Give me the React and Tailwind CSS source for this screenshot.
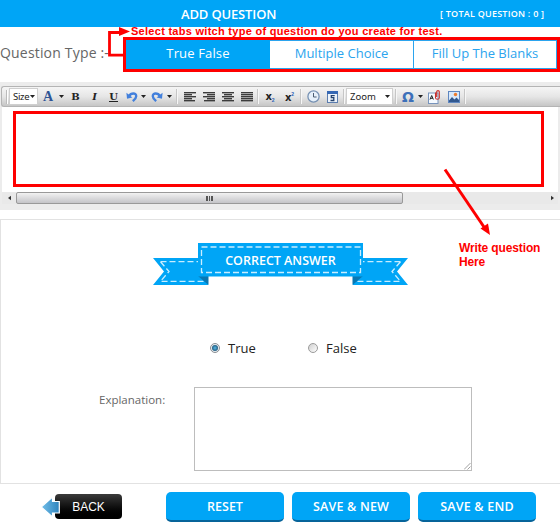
import React from "react";

const sans = "font-['Open_Sans','Noto_Sans',sans-serif]";

const Caret = () => (
  <svg width="5" height="3" viewBox="0 0 5 3" className="shrink-0">
    <path d="M0 0h5L2.5 3z" fill="#222" />
  </svg>
);

const Cell = ({ w, children }) => (
  <div className={`flex h-full shrink-0 items-center justify-center ${w}`}>{children}</div>
);

const Sep = ({ w }) => (
  <Cell w={w}>
    <span className="h-[15px] w-px bg-[#c6c6c6]" />
    <span className="h-[15px] w-px bg-[#f7f7f7]" />
  </Cell>
);

const Lines = ({ rows }) => (
  <svg width="12" height="10" viewBox="0 0 12 10">
    {rows.map(([x, w], i) => (
      <rect key={i} x={x} y={i * 2} width={w} height="1.4" fill="#3c3c3c" />
    ))}
  </svg>
);

const Undo = ({ flip }) => (
  <svg width="12" height="12" viewBox="0 0 12 12" className={flip ? "-scale-x-100" : ""}>
    <path d="M3 5C5 1.8 10.3 1.4 10.2 5.2 10.1 7.6 8.600 8.700 6.800 10.200" fill="none" stroke="#4380dc" strokeWidth="2.400" />
    <path d="M.4 1.800 1 7.800 6.400 6.600z" fill="#4380dc" />
  </svg>
);

function Toolbar() {
  return (
    <div className="ml-px mt-[4px] flex h-[21px] shrink-0 items-center overflow-hidden rounded-l-[3px] border border-r-0 border-[#b4b4b4] bg-linear-to-b from-[#f5f5f5] via-[#e6e6e6] to-[#c6c6c6] text-[#222]">
      <Cell w="w-[7px]">
        <span className="ml-[2px] h-[14px] w-[2px] border-x border-l-[#bbb] border-r-white" />
      </Cell>
      <div className="flex h-[17px] w-[29px] shrink-0 items-center justify-between border border-[#cfcfcf] bg-white pl-[3px] pr-[2px]">
        <span className="font-['Noto_Sans',sans-serif] text-[9.5px] leading-none tracking-[-0.3px]">Size</span>
        <Caret />
      </div>
      <Cell w="w-[20px]">
        <span className="font-['Liberation_Serif',serif] text-[14px] font-bold leading-none text-[#2d5394]">A</span>
      </Cell>
      <Cell w="w-[6px]"><Caret /></Cell>
      <Cell w="w-[23px]"><span className="font-['DejaVu_Serif',serif] text-[10px] font-bold leading-none">B</span></Cell>
      <Cell w="w-[15px]"><span className="font-['DejaVu_Serif',serif] text-[10px] font-bold italic leading-none">I</span></Cell>
      <Cell w="w-[23px]"><span className="border-b border-[#222] font-['DejaVu_Serif',serif] text-[10px] font-bold leading-[9px]">U</span></Cell>
      <Cell w="w-[13px]"><Undo /></Cell>
      <Cell w="w-[11px]"><Caret /></Cell>
      <Cell w="w-[15px]"><Undo flip /></Cell>
      <Cell w="w-[10px]"><Caret /></Cell>
      <Sep w="w-[6px]" />
      <Cell w="w-[19px]"><Lines rows={[[0, 12], [0, 8], [0, 12], [0, 8], [0, 11]]} /></Cell>
      <Cell w="w-[19px]"><Lines rows={[[0, 12], [4, 8], [0, 12], [4, 8], [1, 11]]} /></Cell>
      <Cell w="w-[19px]"><Lines rows={[[0, 12], [2, 8], [0, 12], [2, 8], [0, 12]]} /></Cell>
      <Cell w="w-[19px]"><Lines rows={[[0, 12], [0, 12], [0, 12], [0, 12], [0, 12]]} /></Cell>
      <Sep w="w-[4px]" />
      <Cell w="w-[20px]">
        <span className="font-['DejaVu_Sans',sans-serif] text-[10px] font-bold leading-none">x</span>
        <span className="mt-[7px] font-['Liberation_Sans',sans-serif] text-[5px] font-bold leading-none text-[#2b5fb8]">2</span>
      </Cell>
      <Cell w="w-[19px]">
        <span className="mt-[2px] font-['DejaVu_Sans',sans-serif] text-[10px] font-bold leading-none">x</span>
        <span className="mb-[5px] font-['Liberation_Sans',sans-serif] text-[5px] font-bold leading-none text-[#2b5fb8]">2</span>
      </Cell>
      <Sep w="w-[4px]" />
      <Cell w="w-[20px]">
        <svg width="13" height="13" viewBox="0 0 13 13">
          <circle cx="6.5" cy="6.5" r="5.6" fill="#e6f0fa" stroke="#7691b3" strokeWidth="1.3" />
          <path d="M6.5 3v4H9.6" fill="none" stroke="#4b5c72" />
        </svg>
      </Cell>
      <Cell w="w-[19px]">
        <svg width="11" height="12" viewBox="0 0 11 12">
          <rect x=".5" y=".5" width="10" height="11" fill="#eef4fb" stroke="#5a7cae" />
          <rect width="11" height="3" fill="#3668b4" />
          <path d="M7.7 4.7H4.3v2h2.5v2.8H3.5" fill="none" stroke="#26436f" strokeWidth="1.3" />
        </svg>
      </Cell>
      <Sep w="w-[4px]" />
      <div className="flex h-[17px] w-[47px] shrink-0 items-center justify-between border border-[#cfcfcf] bg-white pl-[3px] pr-[2px]">
        <span className="font-['Noto_Sans',sans-serif] text-[9.5px] leading-none">Zoom</span>
        <Caret />
      </div>
      <Sep w="w-[6px]" />
      <Cell w="w-[18px]"><span className="font-['DejaVu_Sans',sans-serif] text-[14px] font-bold leading-none text-[#3d70b9]">Ω</span></Cell>
      <Cell w="w-[6px]"><Caret /></Cell>
      <Cell w="w-[23px]">
        <svg width="13" height="14" viewBox="0 0 13 14">
          <rect x=".5" y="3" width="9.5" height="10.5" fill="#f5faff" stroke="#7894bc" />
          <path d="m2 9.5 1.7-4 1.7 4M2.7 8.3h2" fill="none" stroke="#222" />
          <path d="M7.5 2.5v5.2c0 2 3.8 2 3.8 0V2c0-1.8-2.6-1.8-2.6 0v5" fill="none" stroke="#c9302c" strokeWidth="1.1" />
        </svg>
      </Cell>
      <Cell w="w-[16px]">
        <svg width="12" height="12" viewBox="0 0 12 12">
          <rect x=".5" y=".5" width="11" height="11" fill="#d9e9fb" stroke="#5e86c0" />
          <circle cx="7.5" cy="3.5" r="1.7" fill="#ef7b2c" />
          <path d="M1 9.5 4 6l2.5 2.5L8.5 6.5 11 9v2H1z" fill="#31588f" />
        </svg>
      </Cell>
      <Sep w="w-[6px]" />
    </div>
  );
}

function Ribbon() {
  return (
    <div className="relative h-[42px] w-[255px]">
      <svg width="255" height="42" viewBox="0 0 255 42" className="block">
        <path d="M0 15h55v27H0l11-13.5zM255 15h-55v27h55l-11-13.5z" fill="#00a5f6" />
        <path d="M7.5 18.7H45M7.5 18.7l8.5 9.8-8.5 9.8H55M247.5 18.7H210M247.5 18.7l-8.5 9.8 8.5 9.8H200" fill="none" stroke="#c8edff" strokeWidth="1.3" strokeDasharray="6 3" />
        <path d="M45 33h10.500v9zM210 33h-10.500v9z" fill="#0877b3" />
        <rect x="45" width="165" height="33.500" fill="#00a5f6" />
        <rect x="48.500" y="4" width="159" height="25.500" fill="none" stroke="#c8edff" strokeWidth="1.300" strokeDasharray="6 3" />
      </svg>
      <span className="absolute inset-0 h-[35px] text-center text-[12.5px] font-semibold leading-[35px] text-white">CORRECT ANSWER</span>
    </div>
  );
}

const ActionButton = ({ children, className = "" }) => (
  <button className={`h-[30px] w-[118px] shrink-0 rounded-[5px] border-b-2 border-[#07649a] bg-[#00a5f6] pt-px text-[12.5px] font-semibold leading-[28px] text-white ${className}`}>
    {children}
  </button>
);

export default function App() {
  return (
    <div className={`relative flex h-[528px] w-[560px] flex-col overflow-hidden bg-white ${sans}`}>
      <header className="flex h-[27px] shrink-0 items-center whitespace-nowrap bg-[#00a5f6] font-semibold text-white">
        <h1 className="ml-[181px] w-[259px] pt-px text-[13px] leading-none tracking-[-0.15px]">ADD QUESTION</h1>
        <span className="text-[9px] leading-none tracking-[0.24px]">[ TOTAL QUESTION : 0 ]</span>
      </header>

      <div className="flex h-[55px] shrink-0 items-start whitespace-nowrap">
        <span className="w-[123px] shrink-0 pt-[16px] text-[14px] leading-[19px] tracking-[0.18px] text-[#666]">Question Type :-</span>
        <nav className="mt-[10px] flex h-[35px] w-[437px] shrink-0 border-[3px] border-[#fe0000] text-[13px] leading-[25px] text-[#2ba4ee]">
          <div className="w-[144px] border border-[#00a5f6] bg-[#00a5f6] text-center tracking-[0.15px] text-white">True False</div>
          <div className="w-[144px] border border-l-0 border-[#2ba4ee] text-center">Multiple Choice</div>
          <div className="flex-1 border border-l-0 border-[#2ba4ee] text-center">Fill Up The Blanks</div>
        </nav>
      </div>

      <section className="flex h-[128px] shrink-0 flex-col bg-[#ececec]">
        <Toolbar />
        <div className="mx-[2px] h-[85px] shrink-0 bg-white pl-[11px] pt-[4px]">
          <div className="h-[76px] w-[531px] border-[3px] border-[#fe0000]" />
        </div>
        <div className="mx-[2px] flex h-[12px] shrink-0 items-center bg-[#e9e9e9]">
          <div className="flex w-[14px] justify-center">
            <svg width="3" height="6" viewBox="0 0 4 6"><path d="M4 0v6L0 3z" fill="#333" /></svg>
          </div>
          <div className="flex h-[12px] w-[387px] items-center justify-center gap-px rounded-[2px] border border-[#999] bg-linear-to-b from-[#f2f2f2] to-[#c4c4c8]">
            <span className="h-[5px] w-[1.5px] bg-[#555]" />
            <span className="h-[5px] w-[1.5px] bg-[#555]" />
            <span className="h-[5px] w-[1.5px] bg-[#555]" />
          </div>
          <div className="ml-auto flex w-[12px] justify-center">
            <svg width="3" height="6" viewBox="0 0 4 6"><path d="M0 0v6l4-3z" fill="#333" /></svg>
          </div>
        </div>
      </section>

      <section className="mt-[9px] flex h-[265px] shrink-0 flex-col border border-r-0 border-[#e2e2e2]">
        <div className="ml-[152px] mt-[23px]"><Ribbon /></div>
        <div className="mt-[53px] flex h-[20px] items-center pl-[209px] text-[13px] leading-none text-[#222]">
          <label className="flex w-[98px] items-center">
            <span className="mr-[8px] flex size-[10px] items-center justify-center rounded-full border border-[#8b8f94] bg-[#e8edf0]">
              <span className="size-[6px] rounded-full bg-radial from-[#55b9e9] to-[#123956]" />
            </span>
            True
          </label>
          <label className="flex items-center">
            <span className="mr-[8px] size-[10px] rounded-full border border-[#9b9b9b] bg-linear-to-br from-[#cfcfcf] to-white" />
            False
          </label>
        </div>
        <div className="mt-[29px] flex items-start">
          <span className="w-[193px] pl-[98px] pt-[5px] text-[11.5px] leading-[15px] text-[#666]">Explanation:</span>
          <div className="flex h-[84px] w-[278px] items-end justify-end border border-[#bdbdbd] bg-white">
            <svg width="7" height="7" viewBox="0 0 7 7"><path d="M0 6.500 6.500 0M3.500 6.500l3-3" stroke="#888" strokeWidth=".8" /></svg>
          </div>
        </div>
      </section>

      <footer className="flex shrink-0 items-start whitespace-nowrap pt-[8px]">
        <div className="ml-[41px] flex h-[30px] w-[125px] shrink-0 items-center">
          <div className="relative h-[26px] w-[82px]">
            <div className="ml-[14px] flex h-[25px] w-[67px] items-center justify-center rounded-[4px] bg-linear-to-b from-[#3b3b3b] to-black font-['Liberation_Sans',sans-serif] text-[12px] text-white">BACK</div>
            <svg width="20" height="24" viewBox="0 0 20 24" className="absolute left-0 top-px">
              <defs>
                <linearGradient id="arrow" x1="0" x2="1"><stop stopColor="#72bfe9" /><stop offset="1" stopColor="#2e83bd" /></linearGradient>
              </defs>
              <path d="M.2 12 11.500 2v4.500h6.800v11.500h-6.800v4z" fill="url(#arrow)" stroke="white" strokeWidth="1.200" />
            </svg>
          </div>
        </div>
        <ActionButton>RESET</ActionButton>
        <ActionButton className="ml-[8px] tracking-[0.2px]">SAVE &amp; NEW</ActionButton>
        <ActionButton className="ml-[8px] tracking-[0.2px]">SAVE &amp; END</ActionButton>
      </footer>

      <svg width="560" height="528" viewBox="0 0 560 528" className="pointer-events-none absolute inset-0">
        <path d="M124 55.200h-14.500V32.500H121" fill="none" stroke="#fe0000" strokeWidth="2.800" />
        <path d="m119 27 11 4.500-11 4.500z" fill="#fe0000" />
        <path d="M445 169.500 484 227" stroke="#fe0000" strokeWidth="3" />
        <path d="m490 235-9.500-6.500 7.500-5z" fill="#fe0000" />
      </svg>
      <p className="absolute left-[131px] top-[25px] whitespace-nowrap font-['Liberation_Sans',sans-serif] text-[11px] font-bold leading-[12px] tracking-[0.28px] text-[#fe0000]">Select tabs witch type of question do you create for test.</p>
      <p className="absolute left-[459px] top-[241px] w-[90px] font-['Liberation_Sans',sans-serif] text-[12px] font-bold leading-[14px] tracking-[-0.13px] text-[#fe0000]">Write question<br />Here</p>
    </div>
  );
}
